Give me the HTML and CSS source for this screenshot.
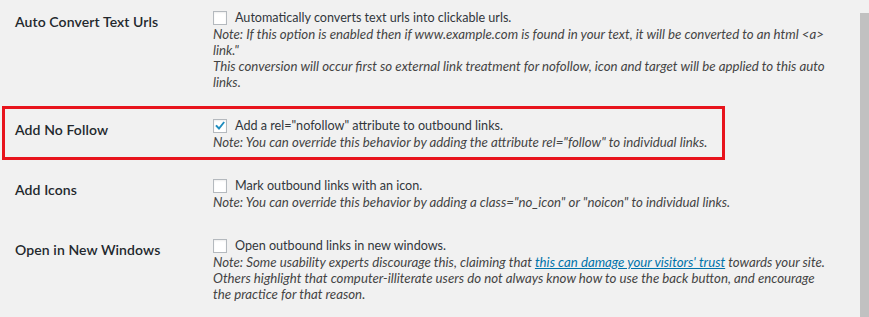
FILE: index.html
```html
<!DOCTYPE html>
<html lang="en">
<head>
<meta charset="utf-8">
<title>Link settings</title>
<link rel="stylesheet" href="styles.css">
</head>
<body>
<div class="settings">
  <div class="row">
    <div class="label">Auto Convert Text Urls</div>
    <div class="field">
      <label class="check"><span class="box"></span><span>Automatically converts text urls into clickable urls.</span></label>
      <p class="note">Note: If this option is enabled then if www.example.com is found in your text, it will be converted to an html &lt;a&gt; link."<br>This conversion will occur first so external link treatment for nofollow, icon and target will be applied to this auto links.</p>
    </div>
  </div>
  <div class="row highlight">
    <div class="label">Add No Follow</div>
    <div class="field">
      <label class="check"><span class="box checked"><svg viewBox="0 0 14 14" width="14" height="14"><path d="M3 7 L5.8 9.9 L11.2 3.2" fill="none" stroke="#1e8cbe" stroke-width="2.2" stroke-linecap="square" stroke-linejoin="miter"/></svg></span><span>Add a rel="nofollow" attribute to outbound links.</span></label>
      <p class="note">Note: You can override this behavior by adding the attribute rel="follow" to individual links.</p>
    </div>
  </div>
  <div class="row">
    <div class="label">Add Icons</div>
    <div class="field">
      <label class="check"><span class="box"></span><span>Mark outbound links with an icon.</span></label>
      <p class="note">Note: You can override this behavior by adding a class="no_icon" or "noicon" to individual links.</p>
    </div>
  </div>
  <div class="row">
    <div class="label">Open in New Windows</div>
    <div class="field">
      <label class="check"><span class="box"></span><span>Open outbound links in new windows.</span></label>
      <p class="note">Note: Some usability experts discourage this, claiming that <a href="#">this can damage your visitors' trust</a> towards your site. Others highlight that computer-illiterate users do not always know how to use the back button, and encourage the practice for that reason.</p>
    </div>
  </div>
</div>
<div class="scrollbar"></div>
</body>
</html>
```

FILE: styles.css
```css
html, body {
  margin: 0;
  padding: 0;
  background: #f1f1f1;
  height: 100%;
  overflow: hidden;
}
body {
  font-family: Lato, "Open Sans", sans-serif;
  font-size: 13px;
  color: #444;
}
.settings {
  display: flex;
  flex-direction: column;
  gap: 28px;
  padding: 10px 0 0 15px;
}
.row {
  display: grid;
  grid-template-columns: 198px 614px;
}
.row.highlight {
  border: 3px solid #e8141c;
  width: 723px;
  box-sizing: border-box;
  margin: -12px 0 -10px -13px;
  padding: 9px 0 7px 10px;
}
.label {
  font-size: 14px;
  font-weight: 600;
  color: #23282d;
  line-height: 18px;
  padding-top: 3px;
  letter-spacing: 0.1px;
}
.field {
  line-height: 16px;
}
.check {
  display: flex;
  align-items: center;
  gap: 8px;
  color: #32373c;
  font-size: 12.6px;
}
.box {
  width: 14px;
  height: 14px;
  box-sizing: border-box;
  border: 1px solid #b4b9be;
  background: #fff;
  box-shadow: inset 0 1px 2px rgba(0,0,0,0.07);
  display: flex;
  align-items: center;
  justify-content: center;
  flex: none;
}
.box svg {
  display: block;
}
.note {
  margin: 0;
  font-style: italic;
  font-size: 13.25px;
  color: #444;
}
.note a {
  color: #0073aa;
  text-decoration: underline;
}
.scrollbar {
  position: absolute;
  top: 13px;
  right: 0;
  width: 9px;
  bottom: 0;
  background: #c1c1c1;
}
```
